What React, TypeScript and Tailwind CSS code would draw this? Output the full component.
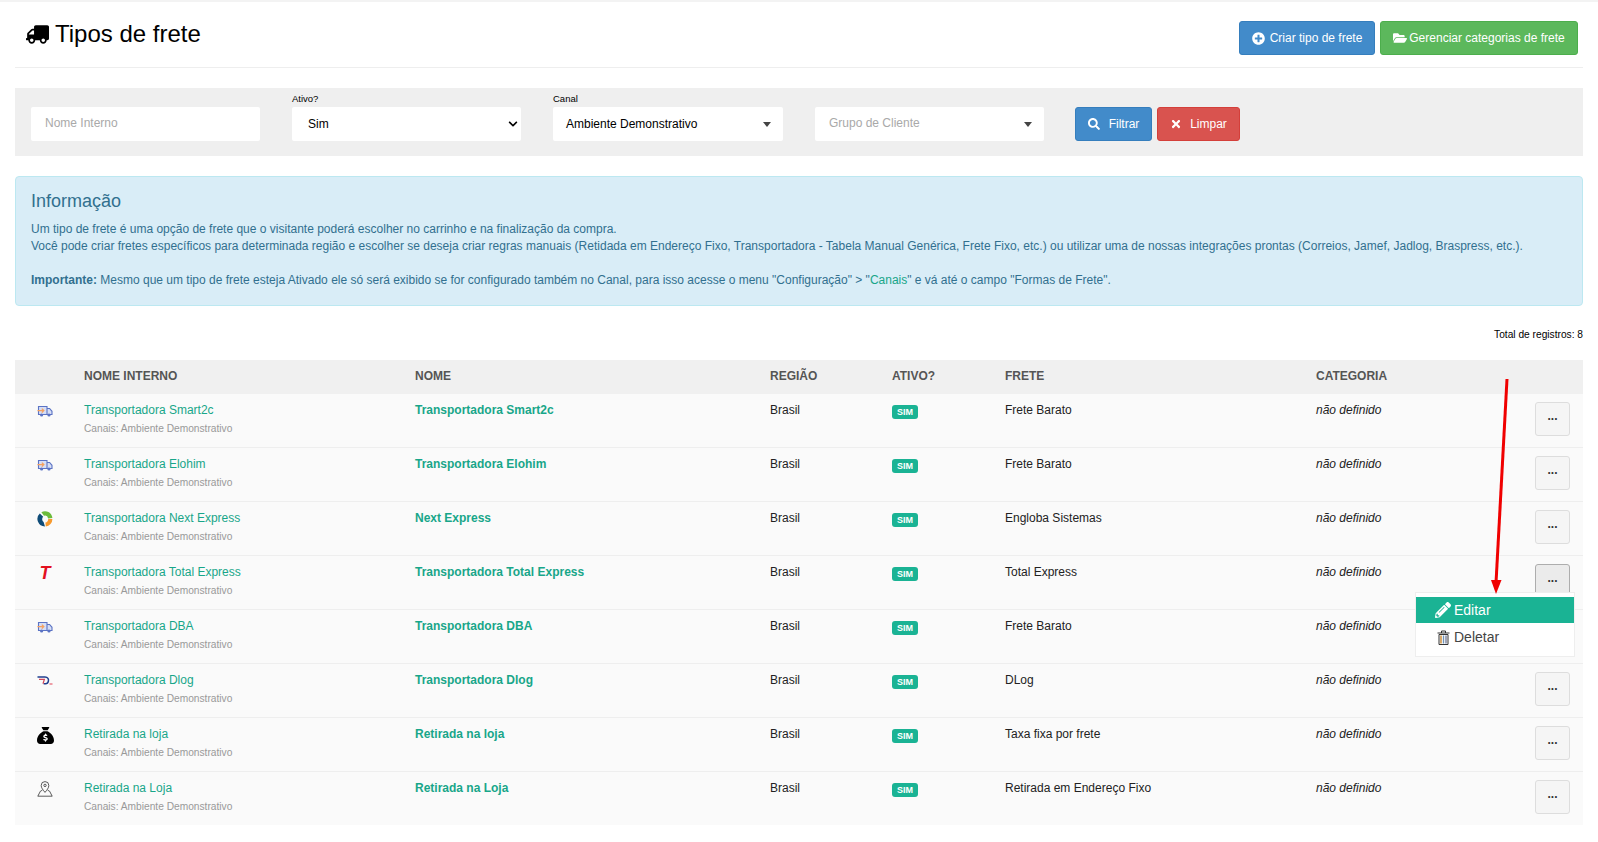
import { FaFolderOpen, FaPlusCircle, FaSearch, FaTimes, FaTruck, FaPencilAlt, FaChevronDown } from 'react-icons/fa'
import { FaSackDollar } from 'react-icons/fa6'

const linhas = [
  { nome: 'Transportadora Smart2c', titulo: 'Transportadora Smart2c', frete: 'Frete Barato', icone: 'van' },
  { nome: 'Transportadora Elohim', titulo: 'Transportadora Elohim', frete: 'Frete Barato', icone: 'van' },
  { nome: 'Transportadora Next Express', titulo: 'Next Express', frete: 'Engloba Sistemas', icone: 'next' },
  { nome: 'Transportadora Total Express', titulo: 'Transportadora Total Express', frete: 'Total Express', icone: 'total' },
  { nome: 'Transportadora DBA', titulo: 'Transportadora DBA', frete: 'Frete Barato', icone: 'van' },
  { nome: 'Transportadora Dlog', titulo: 'Transportadora Dlog', frete: 'DLog', icone: 'dlog' },
  { nome: 'Retirada na loja', titulo: 'Retirada na loja', frete: 'Taxa fixa por frete', icone: 'bag' },
  { nome: 'Retirada na Loja', titulo: 'Retirada na Loja', frete: 'Retirada em Endereço Fixo', icone: 'pin' },
]

function IconeVan() {
  return (
    <svg width="16" height="16" viewBox="0 0 16 16" fill="none">
      <path d="M1.5 3.5h8.5v8H1.5z M10 5.5h2.6l2.4 2.8v3.2h-5z" fill="#d6def5" stroke="#5b73c4" strokeWidth="1.1" />
      <circle cx="4.6" cy="12" r="1.6" fill="#5b73c4" />
      <circle cx="12" cy="12" r="1.6" fill="#5b73c4" />
      <path d="M0.5 7.6h6M4.8 5.6l2 2-2 2" stroke="#f5a05f" strokeWidth="1.3" />
    </svg>
  )
}

function IconeNext() {
  return (
    <svg width="16" height="16" viewBox="0 0 16 16" fill="none">
      <path d="M4.4 1.2A7.4 7.4 0 0 1 15.4 7L11.2 7.4A3.4 3.4 0 0 0 7 4.8Z" fill="#6cbb3c" />
      <path d="M15.4 8A7.4 7.4 0 0 1 8.8 15.4L8.4 11.6A3.6 3.6 0 0 0 11.2 8Z" fill="#f79a2e" />
      <path d="M8 15.4A7.4 7.4 0 0 1 2.8 2.6L6.2 5.8A3.4 3.4 0 0 0 6.6 11Z" fill="#0f4c78" />
    </svg>
  )
}

function IconeDlog() {
  return (
    <svg width="16" height="16" viewBox="0 0 16 16" fill="none">
      <path d="M0.5 4h7.5c3 0 3.8 2.4 3.4 4.2-.3 1.5-1.3 2.6-2.9 2.6H6.6" stroke="#1f3f8f" strokeWidth="1.5" />
      <path d="M2 6.3h5.4L6 10.8" stroke="#d2475a" strokeWidth="1.2" />
      <path d="M12.5 11h3" stroke="#e6606e" strokeWidth="1.2" />
    </svg>
  )
}

function IconePin() {
  return (
    <svg width="16" height="16" viewBox="0 0 16 16" fill="none" stroke="#333" strokeWidth="0.8">
      <path d="M8 11.4C6 8.8 4.2 7 4.2 4.4a3.8 3.8 0 0 1 7.6 0C11.8 7 10 8.8 8 11.4Z" />
      <circle cx="8" cy="4.4" r="1.2" />
      <path d="M5.4 9.2 3.4 10.2 0.8 15.2h14.4l-2.6-5-2-1" />
    </svg>
  )
}

function IconeLinha({ tipo }: { tipo: string }) {
  if (tipo === 'van') return <IconeVan />
  if (tipo === 'next') return <IconeNext />
  if (tipo === 'dlog') return <IconeDlog />
  if (tipo === 'bag') return <FaSackDollar className="text-[17px] text-black" />
  if (tipo === 'pin') return <IconePin />
  return <span className="w-4 text-center text-[18px] leading-4 font-bold italic text-[#e3101f]">T</span>
}

function IconeLixeira() {
  return (
    <svg width="13" height="15" viewBox="0 0 13 15" fill="none">
      <path d="M0.5 3h12M4.5 3V1h4v2" stroke="#333" strokeWidth="1" />
      <path d="M2 4.5h9V14.5H2z" fill="#fff" stroke="#333" strokeWidth="1" />
      <path d="M4 5.5v8" stroke="#c8842c" strokeWidth="1.4" />
      <path d="M6.5 5.5v8" stroke="#6f93b8" strokeWidth="1.4" />
      <path d="M9 5.5v8" stroke="#7a7f9a" strokeWidth="1.4" />
    </svg>
  )
}

export default function App() {
  return (
    <div className="min-h-[842px] overflow-hidden border-t-2 border-[#f3f3f3] bg-white px-[15px] font-['Liberation_Sans',Arial,sans-serif] text-xs text-[#333]">
      <header className="flex h-[66px] items-start justify-between border-b border-[#eeeeee]">
        <h1 className="mt-[16px] flex items-center gap-[6px] pl-[11px] text-2xl leading-[32px] text-black">
          <FaTruck className="-scale-x-100 text-[23px]" />
          Tipos de frete
        </h1>
        <div className="mt-[19px] mr-[5px] flex gap-[5px] text-white">
          <button className="flex h-[34px] w-[136px] items-center justify-center gap-[5px] rounded-[3px] border border-[#357ebd] bg-[#428bca]">
            <FaPlusCircle className="text-[13px]" />
            Criar tipo de frete
          </button>
          <button className="flex h-[34px] w-[198px] items-center justify-center gap-[2px] rounded-[3px] border border-[#4cae4c] bg-[#5cb85c]">
            <FaFolderOpen className="text-[14px]" />
            Gerenciar categorias de frete
          </button>
        </div>
      </header>

      <section className="mt-[20px] flex h-[68px] bg-[#efefef] pt-[19px] pl-[16px]">
        <input
          placeholder="Nome Interno"
          className="h-[34px] w-[229px] rounded-[2px] bg-white px-[14px] pb-[2px] text-xs outline-none placeholder:text-[#a9a9a9]"
        />
        <div className="relative ml-[32px]">
          <label className="absolute -top-[14px] left-0 text-[9.5px] text-black">Ativo?</label>
          <div className="flex h-[34px] w-[229px] items-center justify-between rounded-[2px] bg-white pr-[3px] pl-[16px] text-black">
            Sim
            <FaChevronDown className="text-[10px]" />
          </div>
        </div>
        <div className="relative ml-[32px]">
          <label className="absolute -top-[14px] left-0 text-[9.5px] text-black">Canal</label>
          <div className="flex h-[34px] w-[230px] items-center justify-between rounded-[2px] bg-white pr-[12px] pl-[13px] text-black">
            Ambiente Demonstrativo
            <span className="h-0 w-0 border-x-4 border-t-[5px] border-x-transparent border-t-[#444]" />
          </div>
        </div>
        <div className="ml-[32px] flex h-[34px] w-[229px] items-center justify-between rounded-[2px] bg-white pr-[12px] pb-[2px] pl-[14px] text-[#a9a9a9]">
          Grupo de Cliente
          <span className="mt-[2px] h-0 w-0 border-x-4 border-t-[5px] border-x-transparent border-t-[#444]" />
        </div>
        <div className="ml-[31px] flex gap-[5px] text-white">
          <button className="flex h-[34px] w-[77px] items-center justify-center gap-[9px] rounded-[3px] border border-[#357ebd] bg-[#428bca]">
            <FaSearch className="text-[12px]" />
            Filtrar
          </button>
          <button className="flex h-[34px] w-[83px] items-center justify-center gap-[8px] rounded-[3px] border border-[#d43f3a] bg-[#d9534f]">
            <FaTimes className="text-[12px]" />
            Limpar
          </button>
        </div>
      </section>

      <section className="mt-[20px] h-[130px] rounded-[4px] border border-[#bce8f1] bg-[#d9edf7] px-[15px] pt-[14px] text-[#31708f]">
        <h4 className="text-lg leading-5">Informação</h4>
        <p className="mt-[10px] leading-[17.14px]">
          Um tipo de frete é uma opção de frete que o visitante poderá escolher no carrinho e na finalização da compra.
          <br />
          Você pode criar fretes específicos para determinada região e escolher se deseja criar regras manuais (Retidada em Endereço Fixo, Transportadora - Tabela Manual Genérica, Frete Fixo, etc.) ou utilizar uma de nossas integrações prontas (Correios, Jamef, Jadlog, Braspress, etc.).
          <br />
          <br />
          <strong>Importante:</strong> Mesmo que um tipo de frete esteja Ativado ele só será exibido se for configurado também no Canal, para isso acesse o menu "Configuração" &gt; "<span className="text-[#18a689]">Canais</span>" e vá até o campo "Formas de Frete".
        </p>
      </section>

      <p className="mt-[23px] h-[31px] text-right text-[10.2px] leading-[12px] text-black">Total de registros: 8</p>

      <div className="relative">
        <div className="grid h-[34px] grid-cols-[69px_331px_355px_122px_113px_311px_267px] items-center bg-[#f0f0f0] pb-[2px] font-bold text-[#555]">
          <span />
          <span>NOME INTERNO</span>
          <span>NOME</span>
          <span>REGIÃO</span>
          <span>ATIVO?</span>
          <span>FRETE</span>
          <span>CATEGORIA</span>
        </div>

        <div>
          {linhas.map((linha, i) => (
            <div
              key={i}
              className="grid h-[54px] grid-cols-[69px_331px_355px_122px_113px_311px_267px] border-b border-[#eeeeee] bg-[#fafafa] pt-[8px] last:h-[53px] last:border-b-0"
            >
              <div className="flex justify-center pt-[1px] pr-[9px]">
                <IconeLinha tipo={linha.icone} />
              </div>
              <div>
                <a className="block leading-4 text-[#18a689]">{linha.nome}</a>
                <small className="mt-[3px] block text-[10.2px] leading-4 text-[#999]">Canais: Ambiente Demonstrativo</small>
              </div>
              <a className="leading-4 font-bold text-[#18a689]">{linha.titulo}</a>
              <span className="leading-4 text-[#222]">Brasil</span>
              <div>
                <span className="mt-[3px] inline-block h-[14px] w-[26px] rounded-[3px] bg-[#1ab394] text-center text-[9px] leading-[14px] font-bold text-white">SIM</span>
              </div>
              <span className="leading-4 text-[#222]">{linha.frete}</span>
              <div className="flex items-start justify-between pr-[13px]">
                <span className="leading-4 text-[#222] italic">não definido</span>
                <button className={`flex h-[34px] w-[35px] items-center justify-center rounded-[3px] border font-bold ${i === 3 ? 'border-[#adadad] bg-[#ebebeb]' : 'border-[#dddddd] bg-[#f5f5f5]'}`}>
                  <span className="-mt-[6px] leading-none">...</span>
                </button>
              </div>
            </div>
          ))}
        </div>

        <div className="absolute top-[232px] right-[8px] h-[65px] w-[160px] border border-[#eeeeee] bg-white pt-[4px] text-sm">
          <div className="flex h-[26px] items-center gap-[3px] bg-[#1ab394] pl-[19px] text-white">
            <FaPencilAlt className="text-[16px]" />
            Editar
          </div>
          <div className="flex h-[28px] items-center gap-[4px] pl-[21px] text-[#444]">
            <IconeLixeira />
            Deletar
          </div>
        </div>

        <svg className="pointer-events-none absolute top-[18px] right-[72px]" width="20" height="218" viewBox="0 0 20 218" fill="none">
          <path d="M16 1 5 205" stroke="#f00000" strokeWidth="3" />
          <path d="M0 202h10.5L5 216Z" fill="#f00000" />
        </svg>
      </div>
    </div>
  )
}
